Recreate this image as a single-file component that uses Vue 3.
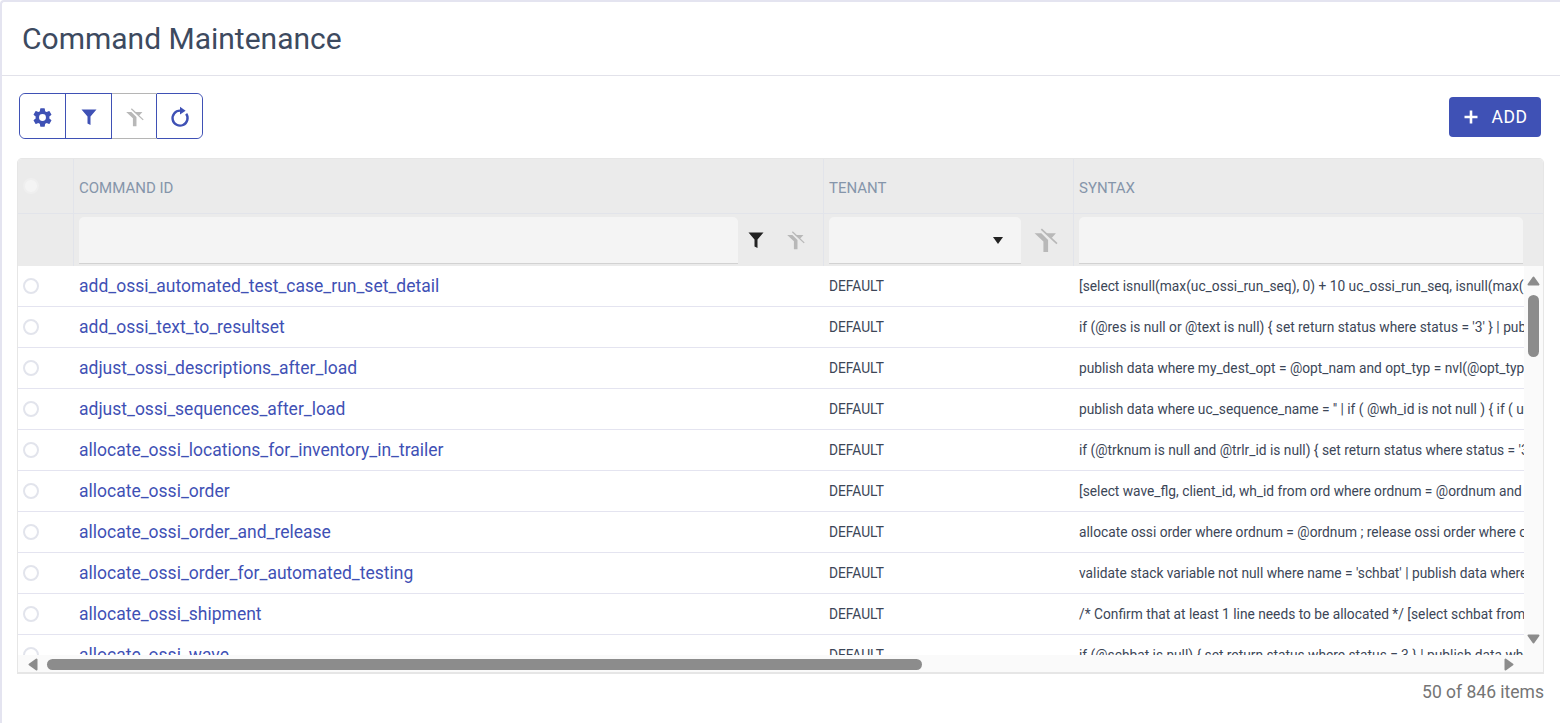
<template>
  <div class="page">
    <header class="title-bar">
      <h1>Command Maintenance</h1>
    </header>

    <div class="toolbar">
      <div class="btn-group">
        <button class="tool-btn">
          <svg width="23" height="23" viewBox="0 0 24 24"><path fill="#3f51b5" d="M19.14 12.94c.04-.3.06-.61.06-.94 0-.32-.02-.64-.07-.94l2.03-1.58a.49.49 0 0 0 .12-.61l-1.92-3.32a.49.49 0 0 0-.59-.22l-2.39.96c-.5-.38-1.03-.7-1.62-.94l-.36-2.54a.48.48 0 0 0-.48-.41h-3.84a.47.47 0 0 0-.47.41l-.36 2.54c-.59.24-1.13.57-1.62.94l-2.39-.96a.48.48 0 0 0-.59.22L2.74 8.87a.47.47 0 0 0 .12.61l2.03 1.58c-.05.3-.09.63-.09.94s.02.64.07.94l-2.03 1.58a.49.49 0 0 0-.12.61l1.92 3.32c.12.22.37.29.59.22l2.39-.96c.5.38 1.03.7 1.62.94l.36 2.54c.05.24.24.41.48.41h3.84c.24 0 .44-.17.47-.41l.36-2.54c.59-.24 1.13-.56 1.62-.94l2.39.96c.22.08.47 0 .59-.22l1.92-3.32a.47.47 0 0 0-.12-.61l-2.01-1.58zM12 15.6a3.6 3.6 0 1 1 0-7.2 3.6 3.6 0 0 1 0 7.2z"/></svg>
        </button>
        <button class="tool-btn">
          <svg width="20" height="20" viewBox="0 0 20 20"><path fill="#3f51b5" :d="funnel"/></svg>
        </button>
        <button class="tool-btn off">
          <svg width="19" height="19" viewBox="0 0 24 24"><path :d="clearFunnel" fill="#b8b8b8"/><path :d="clearSlash" stroke="#b8b8b8" stroke-width="1.6"/></svg>
        </button>
        <button class="tool-btn last">
          <svg width="22" height="22" viewBox="0 0 22 22"><path fill="none" stroke="#3f51b5" stroke-width="2.4" d="M11 4.600A7.500 7.500 0 1 0 17.200 7.800"/><path fill="#3f51b5" d="M11 .8l5.600 3.900-5.600 3.900z"/></svg>
        </button>
      </div>
      <button class="add-btn">
        <svg width="16" height="16" viewBox="0 0 16 16"><path stroke="#fff" stroke-width="2.6" d="M8 1.500v13M1.500 8h13"/></svg>
        <span>ADD</span>
      </button>
    </div>

    <div class="grid">
      <div class="grid-head">
        <div class="head-row">
          <div class="cell col-check"><span class="radio head-radio"></span></div>
          <div class="cell col-id">COMMAND ID</div>
          <div class="cell col-tenant">TENANT</div>
          <div class="cell col-syntax">SYNTAX</div>
        </div>
        <div class="filter-row">
          <div class="cell col-check"></div>
          <div class="cell col-id">
            <div class="filter-input"></div>
            <svg class="filter-icon" width="20" height="20" viewBox="0 0 20 20"><path fill="#222" :d="funnel"/></svg>
            <svg class="clear-icon" width="19" height="19" viewBox="0 0 24 24"><path :d="clearFunnel" fill="#b8b8b8"/><path :d="clearSlash" stroke="#b8b8b8" stroke-width="1.6"/></svg>
          </div>
          <div class="cell col-tenant">
            <div class="filter-input select"><span class="caret"></span></div>
            <svg class="clear-icon big" width="25" height="25" viewBox="0 0 24 24"><path :d="clearFunnel" fill="#b8b8b8"/><path :d="clearSlash" stroke="#b8b8b8" stroke-width="1.6"/></svg>
          </div>
          <div class="cell col-syntax">
            <div class="filter-input"></div>
          </div>
        </div>
      </div>

      <div class="grid-body">
        <div class="rows">
          <div v-for="row in rows" :key="row.id" class="row">
            <div class="cell col-check"><span class="radio"></span></div>
            <div class="cell col-id"><a class="cmd-link">{{ row.id }}</a></div>
            <div class="cell col-tenant small">DEFAULT</div>
            <div class="cell col-syntax small">{{ row.syntax }}</div>
          </div>
        </div>
        <div class="v-scroll">
          <svg width="13" height="10" viewBox="0 0 13 10"><path :d="arrowUp" class="arrow"/></svg>
          <span class="v-thumb"></span>
          <svg class="arrow-end" width="13" height="10" viewBox="0 0 13 10"><path :d="arrowDown" class="arrow"/></svg>
        </div>
      </div>
      <div class="h-scroll">
        <svg width="10" height="13" viewBox="0 0 10 13"><path :d="arrowLeft" class="arrow"/></svg>
        <span class="h-thumb"></span>
        <svg class="arrow-right" width="10" height="13" viewBox="0 0 10 13"><path :d="arrowRight" class="arrow"/></svg>
      </div>
    </div>

    <div class="count">50 of 846 items</div>
  </div>
</template>

<script setup>
const funnel = "M2.5 2.5h15l-6 7v8.500l-3-1.500v-7z";
const clearFunnel = "M1.5 5H8l6.500 6.500V23H10V13zM11.500 5H22l-4 4.500z";
const clearSlash = "M8 1l15 14";

const arrowUp = "M6.500 1.500L11.500 8.500H1.500z";
const arrowDown = "M6.500 8.500L11.500 1.500H1.500z";
const arrowLeft = "M1.500 6.500L8.500 1.500V11.500z";
const arrowRight = "M8.500 6.500L1.500 1.500V11.500z";

const rows = [
  { id: "add_ossi_automated_test_case_run_set_detail", syntax: "[select isnull(max(uc_ossi_run_seq), 0) + 10 uc_ossi_run_seq, isnull(max(uc_ossi_run_set_seq), 0)" },
  { id: "add_ossi_text_to_resultset", syntax: "if (@res is null or @text is null) { set return status where status = '3' } | publish data where" },
  { id: "adjust_ossi_descriptions_after_load", syntax: "publish data where my_dest_opt = @opt_nam and opt_typ = nvl(@opt_typ, '') and more" },
  { id: "adjust_ossi_sequences_after_load", syntax: "publish data where uc_sequence_name = '' | if ( @wh_id is not null ) { if ( uc_sequence_name" },
  { id: "allocate_ossi_locations_for_inventory_in_trailer", syntax: "if (@trknum is null and @trlr_id is null) { set return status where status = '3' } | publish" },
  { id: "allocate_ossi_order", syntax: "[select wave_flg, client_id, wh_id from ord where ordnum = @ordnum and client_id = @client_id" },
  { id: "allocate_ossi_order_and_release", syntax: "allocate ossi order where ordnum = @ordnum ; release ossi order where ordnum = @ordnum" },
  { id: "allocate_ossi_order_for_automated_testing", syntax: "validate stack variable not null where name = 'schbat' | publish data where schbat = @schbat" },
  { id: "allocate_ossi_shipment", syntax: "/* Confirm that at least 1 line needs to be allocated */ [select schbat from shipment_line where" },
  { id: "allocate_ossi_wave", syntax: "if (@schbat is null) { set return status where status = 3 } | publish data where schbat = @schbat" },
];
</script>

<style>
html,
body {
  margin: 0;
  background: #fff;
}
</style>

<style scoped>
.page {
  box-sizing: border-box;
  width: 1560px;
  height: 723px;
  overflow: hidden;
  border-top: 2px solid #e4e4f0;
  border-left: 2px solid #e4e4f0;
  border-top-left-radius: 4px;
  font-family: Roboto, "Liberation Sans", sans-serif;
  background: #fff;
}

.title-bar {
  height: 74px;
  box-sizing: border-box;
  border-bottom: 1px solid #e2e2ea;
  padding-left: 20px;
  display: flex;
  align-items: center;
}

h1 {
  margin: 0;
  font-size: 30px;
  font-weight: 400;
  color: #3d4a5f;
}

.toolbar {
  display: flex;
  justify-content: space-between;
  align-items: center;
  height: 46px;
  margin-top: 17px;
  padding: 0 19px 0 17px;
}

.btn-group {
  display: flex;
  height: 46px;
  box-sizing: border-box;
  border: 1px solid #3f51b5;
  border-radius: 6px;
}

.tool-btn {
  width: 46px;
  padding: 2px 0 0;
  background: #fff;
  border: 0;
  border-right: 1px solid #3f51b5;
  display: flex;
  align-items: center;
  justify-content: center;
}

.tool-btn:first-child {
  border-radius: 6px 0 0 6px;
}

.tool-btn.off {
  width: 45px;
  box-shadow: 0 -1px 0 #b5b5b5, 0 1px 0 #b5b5b5;
}

.tool-btn.last {
  width: 45px;
  border-right: 0;
  border-radius: 0 6px 6px 0;
}

.add-btn {
  width: 92px;
  height: 40px;
  margin-top: 2px;
  background: #3f51b5;
  color: #fff;
  border: 0;
  border-radius: 4px;
  display: flex;
  align-items: center;
  justify-content: center;
  gap: 13px;
  padding: 0;
  font-family: inherit;
  font-size: 17.5px;
  letter-spacing: 0.5px;
}

.grid {
  width: 1527px;
  height: 516px;
  box-sizing: border-box;
  margin: 19px 0 0 15px;
  border: 1px solid #e6e6e6;
  border-bottom-width: 2px;
  border-radius: 5px 5px 0 0;
  display: flex;
  flex-direction: column;
  overflow: hidden;
}

.grid-head {
  background: #ebebeb;
  flex: none;
}

.head-row {
  display: flex;
  height: 55px;
  border-bottom: 1px solid #e2e4ea;
  box-sizing: border-box;
  font-size: 15px;
  color: #8595aa;
}

.head-row .cell {
  padding-top: 3px;
}

.filter-row {
  display: flex;
  height: 52px;
}

.cell {
  box-sizing: border-box;
  display: flex;
  align-items: center;
  flex: none;
  padding-left: 5px;
  white-space: nowrap;
  overflow: hidden;
}

.col-check {
  width: 56px;
}

.col-id {
  width: 750px;
}

.col-tenant {
  width: 250px;
}

.col-syntax {
  width: 450px;
}

.head-row .cell,
.filter-row .cell {
  border-right: 1px solid #e2e4ea;
}

.head-row .col-syntax,
.filter-row .col-syntax {
  border-right: 0;
}

.filter-input {
  height: 47px;
  margin-top: 1px;
  box-sizing: border-box;
  background: #f4f4f4;
  border-bottom: 1px solid #d2d2d2;
  border-radius: 5px 5px 0 0;
  flex: none;
}

.col-id .filter-input {
  width: 659px;
}

.col-tenant .filter-input {
  width: 192px;
}

.col-syntax .filter-input {
  width: 444px;
}

.select {
  display: flex;
  align-items: center;
  justify-content: flex-end;
  padding-right: 18px;
}

.caret {
  width: 0;
  height: 0;
  border-left: 5px solid transparent;
  border-right: 5px solid transparent;
  border-top: 7px solid #222;
}

.filter-icon {
  margin-left: 8px;
}

.clear-icon {
  margin-left: 20px;
}

.clear-icon.big {
  margin-left: 12px;
}

.grid-body {
  display: flex;
  height: 389px;
  flex: none;
  background: #fff;
}

.rows {
  width: 1506px;
  flex: none;
  overflow: hidden;
}

.row {
  display: flex;
  height: 41px;
  box-sizing: border-box;
  border-bottom: 1px solid #e4e4f0;
}

.row .cell {
  padding-bottom: 1px;
}

.small {
  font-size: 13.75px;
  color: #3c4657;
}

.cmd-link {
  font-size: 17.5px;
  color: #3f51b5;
}

.radio {
  width: 16px;
  height: 16px;
  box-sizing: border-box;
  border: 2px solid #e2e4ec;
  border-radius: 50%;
  background: #fff;
  flex: none;
}

.head-radio {
  background: #f4f4f4;
  border-color: #efefef;
  margin-top: -3px;
}

.arrow {
  fill: #8c8c8c;
  stroke: #8c8c8c;
  stroke-width: 2;
  stroke-linejoin: round;
}

.v-scroll {
  width: 19px;
  flex: none;
  background: #fafafa;
  display: flex;
  flex-direction: column;
  align-items: center;
  padding-top: 10px;
  box-sizing: border-box;
}

.v-thumb {
  width: 11px;
  height: 62px;
  margin-top: 9px;
  border-radius: 6px;
  background: #8c8c8c;
}

.arrow-end {
  margin-top: auto;
  margin-bottom: 11px;
}

.h-scroll {
  display: flex;
  align-items: center;
  height: 19px;
  flex: none;
  background: #fafafa;
  padding: 0 29px 0 10px;
  box-sizing: border-box;
}

.h-thumb {
  width: 875px;
  height: 11px;
  margin-left: 9px;
  border-radius: 6px;
  background: #8c8c8c;
}

.arrow-right {
  margin-left: auto;
}

.count {
  width: 1542px;
  margin-top: 8px;
  text-align: right;
  font-size: 17.5px;
  color: #757575;
}
</style>
